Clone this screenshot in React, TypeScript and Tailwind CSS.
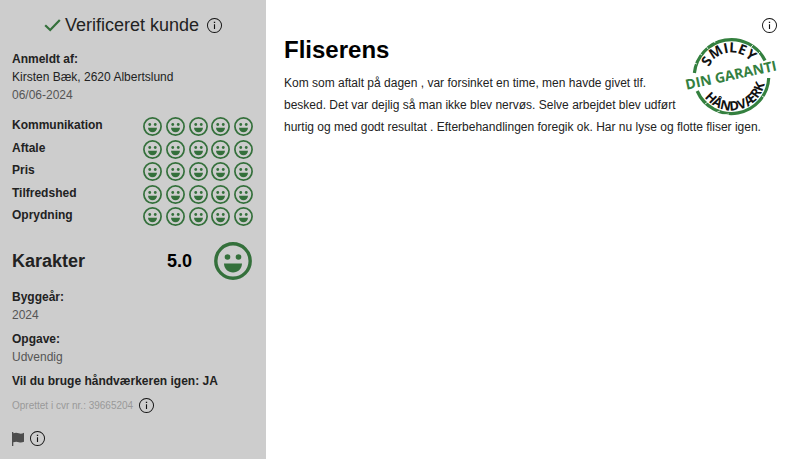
import React from "react";

const ratings = [
  { label: "Kommunikation", score: 5 },
  { label: "Aftale", score: 5 },
  { label: "Pris", score: 5 },
  { label: "Tilfredshed", score: 5 },
  { label: "Oprydning", score: 5 },
];

function Smiley({ className }: { className: string }) {
  return (
    <svg viewBox="0 0 38 38" className={className} aria-hidden="true">
      <circle cx="19" cy="19" r="17.2" fill="none" stroke="#34703b" strokeWidth="3.4" />
      <circle cx="13.5" cy="15" r="2.8" fill="#34703b" />
      <circle cx="24.5" cy="15" r="2.8" fill="#34703b" />
      <path d="M10 21.5h18c0 5-4 9-9 9s-9-4-9-9z" fill="#34703b" />
    </svg>
  );
}

function InfoButton({ label }: { label: string }) {
  return (
    <button type="button" aria-label={label} className="block shrink-0">
      <svg viewBox="0 0 16 16" className="size-[15px] text-[#111]" fill="currentColor" aria-hidden="true">
        <path d="M8 15A7 7 0 1 1 8 1a7 7 0 0 1 0 14m0 1A8 8 0 1 0 8 0a8 8 0 0 0 0 16" />
        <path d="M7.4 6.6h1.2v5.2H7.4zM7.3 4h1.4v1.4H7.3z" />
      </svg>
    </button>
  );
}

function GuaranteeStamp() {
  return (
    <svg
      viewBox="0 0 92 80"
      className="h-20 w-[92px] overflow-visible"
      role="img"
      aria-label="Smiley Håndværk – din garanti"
    >
      <defs>
        <path id="stamp-top" d="M22 41a24.5 24.5 0 0 1 49 0" />
        <path id="stamp-bottom" d="M12.5 40.5a34 34 0 0 0 68 0" />
      </defs>
      <g fill="none" stroke="#34803f" strokeWidth="3.2">
        <path d="M9.4 37A37.3 37.3 0 0 1 80 24.5" />
        <path d="M12.2 55A37.3 37.3 0 0 0 83.7 42" />
      </g>
      <g fill="none" stroke="#fff" strokeWidth="0.8">
        <path d="M9 27l3 1M14 17l3 2M21 10l2 3M29 5l1 2M68 9l-2 2M75 16l-2 2M80 62l-3-2M30 77l5-2M20 68l3-2M38 79l6-1" />
      </g>
      <g fontFamily="'Open Sans', 'Noto Sans', sans-serif" fontWeight="700" fill="#111" textAnchor="middle">
        <text fontSize="14">
          <textPath href="#stamp-top" startOffset="46%">
            SMILEY
          </textPath>
        </text>
        <text fontSize="13">
          <textPath href="#stamp-bottom" startOffset="57%">
            HÅNDVÆRK
          </textPath>
        </text>
        <text transform="translate(47 44) rotate(-12)" fontSize="14" fill="#34803f">
          DIN GARANTI
        </text>
      </g>
    </svg>
  );
}

export default function App() {
  return (
    <div className="flex min-h-screen bg-white font-['Liberation_Sans',Arial,sans-serif] text-xs text-[#222]">
      <aside className="w-[266px] shrink-0 bg-[#cdcdcd] px-3 pt-3">
        <header className="flex items-center justify-center gap-1">
          <svg viewBox="0 0 17 14" className="h-3.5 w-[17px]" aria-hidden="true">
            <path d="M1.2 7.2l5 4.8L15.8 2" fill="none" stroke="#34703b" strokeWidth="2.2" />
          </svg>
          <h2 className="text-lg/[26px]">Verificeret kunde</h2>
          <span className="pl-1">
            <InfoButton label="Om verificeret kunde" />
          </span>
        </header>

        <section className="mt-3 leading-[18px]">
          <h3 className="font-bold">Anmeldt af:</h3>
          <p>Kirsten Bæk, 2620 Albertslund</p>
          <p className="text-[#555]">06/06-2024</p>
        </section>

        <ul className="mt-3 grid h-[113px] auto-rows-fr">
          {ratings.map((rating) => (
            <li key={rating.label} className="flex items-start justify-between">
              <span className="leading-[18px] font-bold">{rating.label}</span>
              <span
                className="mr-px flex w-[110px] justify-between pt-px"
                role="img"
                aria-label={`${rating.score} af 5`}
              >
                {Array.from({ length: rating.score }, (_, i) => (
                  <Smiley key={i} className="size-[19px]" />
                ))}
              </span>
            </li>
          ))}
        </ul>

        <section className="mt-3 flex h-10 items-center text-lg font-bold">
          <h3 className="grow">Karakter</h3>
          <span className="pr-[22px] text-black">5.0</span>
          <Smiley className="mr-0.5 size-[38px]" />
        </section>

        <section className="mt-[7px] leading-[18px]">
          <h3 className="font-bold">Byggeår:</h3>
          <p className="text-[#555]">2024</p>
        </section>
        <section className="mt-1.5 leading-[18px]">
          <h3 className="font-bold">Opgave:</h3>
          <p className="text-[#555]">Udvendig</p>
        </section>
        <p className="mt-1.5 leading-[18px] font-bold">Vil du bruge håndværkeren igen: JA</p>

        <div className="mt-2 flex items-center gap-1.5 text-[10px]/[15px] text-[#999]">
          <p>Oprettet i cvr nr.: 39665204</p>
          <InfoButton label="Om cvr-nummer" />
        </div>
        <div className="mt-[18px] flex items-center gap-1.5">
          <button type="button" aria-label="Anmeld bedømmelse">
            <svg viewBox="0 0 12 14" className="h-3.5 w-3" fill="#4d4d4d" aria-hidden="true">
              <path d="M0 0h1.3v1.2C4 .2 5.2.7 6.8 1.3 8.6 2 10 1.7 12 .8v9c-2 .9-3.4 1-5.2.4C5 9.6 3.6 9.5 1.3 10.3V14H0z" />
            </svg>
          </button>
          <InfoButton label="Om anmeldelse af bedømmelse" />
        </div>
      </aside>

      <main className="min-w-0 grow px-[18px] pt-[18px]">
        <div className="float-right flex flex-col items-end gap-[3px]">
          <InfoButton label="Om garantien" />
          <GuaranteeStamp />
        </div>
        <h1 className="pt-4 text-2xl/[32px] font-bold text-black">Fliserens</h1>
        <p className="mt-1.5 leading-[22px]">
          Kom som aftalt på dagen , var forsinket en time, men havde givet tlf. besked. Det var dejlig så man ikke blev
          nervøs. Selve arbejdet blev udført hurtig og med godt resultat . Efterbehandlingen foregik ok. Har nu lyse og
          flotte fliser igen.
        </p>
      </main>
    </div>
  );
}
